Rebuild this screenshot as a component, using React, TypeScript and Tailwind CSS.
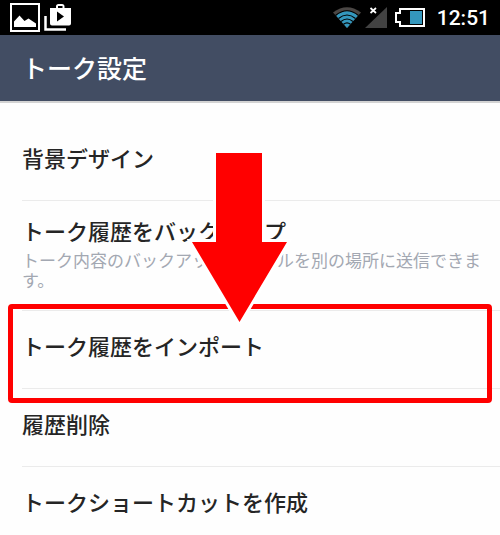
import React from 'react';

type Item = {
   title: string;
   note?: string;
   highlighted?: boolean;
};

const items: Item[] = [
   { title: '背景デザイン' },
   {
      title: 'トーク履歴をバックアップ',
      note: 'トーク内容のバックアップファイルを別の場所に送信できます。',
   },
   { title: 'トーク履歴をインポート', highlighted: true },
   { title: '履歴削除' },
   { title: 'トークショートカットを作成' },
];

const PictureIcon = () => (
   <svg width="30" height="29" viewBox="0 0 30 29" aria-hidden="true">
      <rect x="1" y="1" width="28" height="27" fill="none" stroke="#fff" strokeWidth="2" />
      <path d="M4 24V18.500L9.500 12.500L14.500 18L18.500 15.500L26 20.500V24Z" fill="#fff" />
   </svg>
);

const PlayStoreIcon = () => (
   <svg width="28" height="27" viewBox="0 0 28 27" aria-hidden="true">
      <path d="M1.500 12V25.500H22" fill="none" stroke="#fff" strokeWidth="2.500" />
      <path
         fillRule="evenodd"
         fill="#fff"
         d="M6 4H12V2.500Q12 0 14.500 0H18Q20.500 0 20.500 2.500V4H27V19.500Q27 21.500 25 21.500H8Q6 21.500 6 19.500ZM14 4H18.500V2H14ZM13 7.500V17.500L20 12.500Z"
      />
   </svg>
);

const WifiIcon = () => (
   <svg width="28" height="21" viewBox="0 0 28 21" aria-hidden="true">
      <path d="M0 5.500Q14 -5 28 5.500L14 21Z" fill="#4b4745" />
      <path d="M3 8.500Q14 -0.500 25 8.500L14 21Z" fill="#3497bd" />
      <g fill="none" stroke="#000" strokeWidth="1.200">
         <path d="M2.500 8.500Q14 -1 25.500 8.500" />
         <path d="M5.500 11.500Q14 4.500 22.500 11.500" />
         <path d="M8 14.500Q14 9.500 20 14.500" />
         <path d="M10.500 17.300Q14 14.500 17.500 17.300" />
      </g>
   </svg>
);

const SignalIcon = () => (
   <svg width="22" height="21" viewBox="0 0 22 21" aria-hidden="true">
      <path d="M22 0V21H0Z" fill="#424242" />
      <path d="M5 0H13V7H5Z" fill="#000" />
      <path d="M5.500 1L11 6M11 1L5.500 6" stroke="#fff" strokeWidth="1.700" />
   </svg>
);

const BatteryIcon = () => (
   <svg width="30" height="19" viewBox="0 0 30 19" aria-hidden="true">
      <path d="M5 1H29V18H5V14H1V5H5Z" fill="none" stroke="#fff" strokeWidth="2" />
      <path d="M15 3H27V16H15Z" fill="#3497bd" />
   </svg>
);

const Arrow = () => (
   <svg
      className="pointer-events-none absolute left-[164px] -top-[161px]"
      width="107"
      height="177"
      viewBox="0 0 107 177"
      aria-hidden="true"
   >
      <path
         d="M30 3H76V92H101L53.500 172L6 92H30Z"
         fill="#f00"
         stroke="#fff"
         strokeWidth="6"
         style={{ paintOrder: 'stroke' }}
      />
   </svg>
);

const StatusBar = () => (
   <div className="flex h-[35px] items-center justify-between bg-black pr-2.5 pl-2.5 text-white">
      <div className="flex items-center gap-1">
         <PictureIcon />
         <PlayStoreIcon />
      </div>
      <div className="flex items-center gap-2">
         <div className="flex items-center gap-1">
            <WifiIcon />
            <SignalIcon />
         </div>
         <BatteryIcon />
         <time className="ml-1 font-[Roboto,sans-serif] text-[21px] leading-8 font-medium">12:51</time>
      </div>
   </div>
);

const Row = ({ title, note, highlighted }: Item) => (
   <li className="relative ml-[22px] border-b border-[#ebebeb] last:border-b-0">
      <button type="button" className={note ? 'block w-full pt-[11px] pb-5 text-left' : 'block w-full pt-4 pb-[25px] text-left'}>
         <span className="block text-[22px] leading-9 font-medium">{title}</span>
         {note && <span className="mt-0.5 block pr-4 text-[17px] leading-5 text-[#a3a8b2]">{note}</span>}
      </button>
      {highlighted && (
         <>
            <div className="pointer-events-none absolute -top-[7px] right-2 -bottom-[15px] -left-3.5 rounded border-5 border-[#f00]" />
            <Arrow />
         </>
      )}
   </li>
);

const App = () => {
   return (
      <div className="min-h-screen overflow-hidden bg-[#fefefe] font-['Noto_Sans_CJK_JP',sans-serif] text-[#252525]">
         <StatusBar />
         <header className="flex h-[68px] items-center border-b-2 border-[#d3d3d3] bg-[#424d63] px-[22px]">
            <h1 className="text-[25px] font-medium text-white">トーク設定</h1>
         </header>
         <ul className="pt-5">
            {items.map((item) => (
               <Row key={item.title} {...item} />
            ))}
         </ul>
      </div>
   );
};

export default App;
